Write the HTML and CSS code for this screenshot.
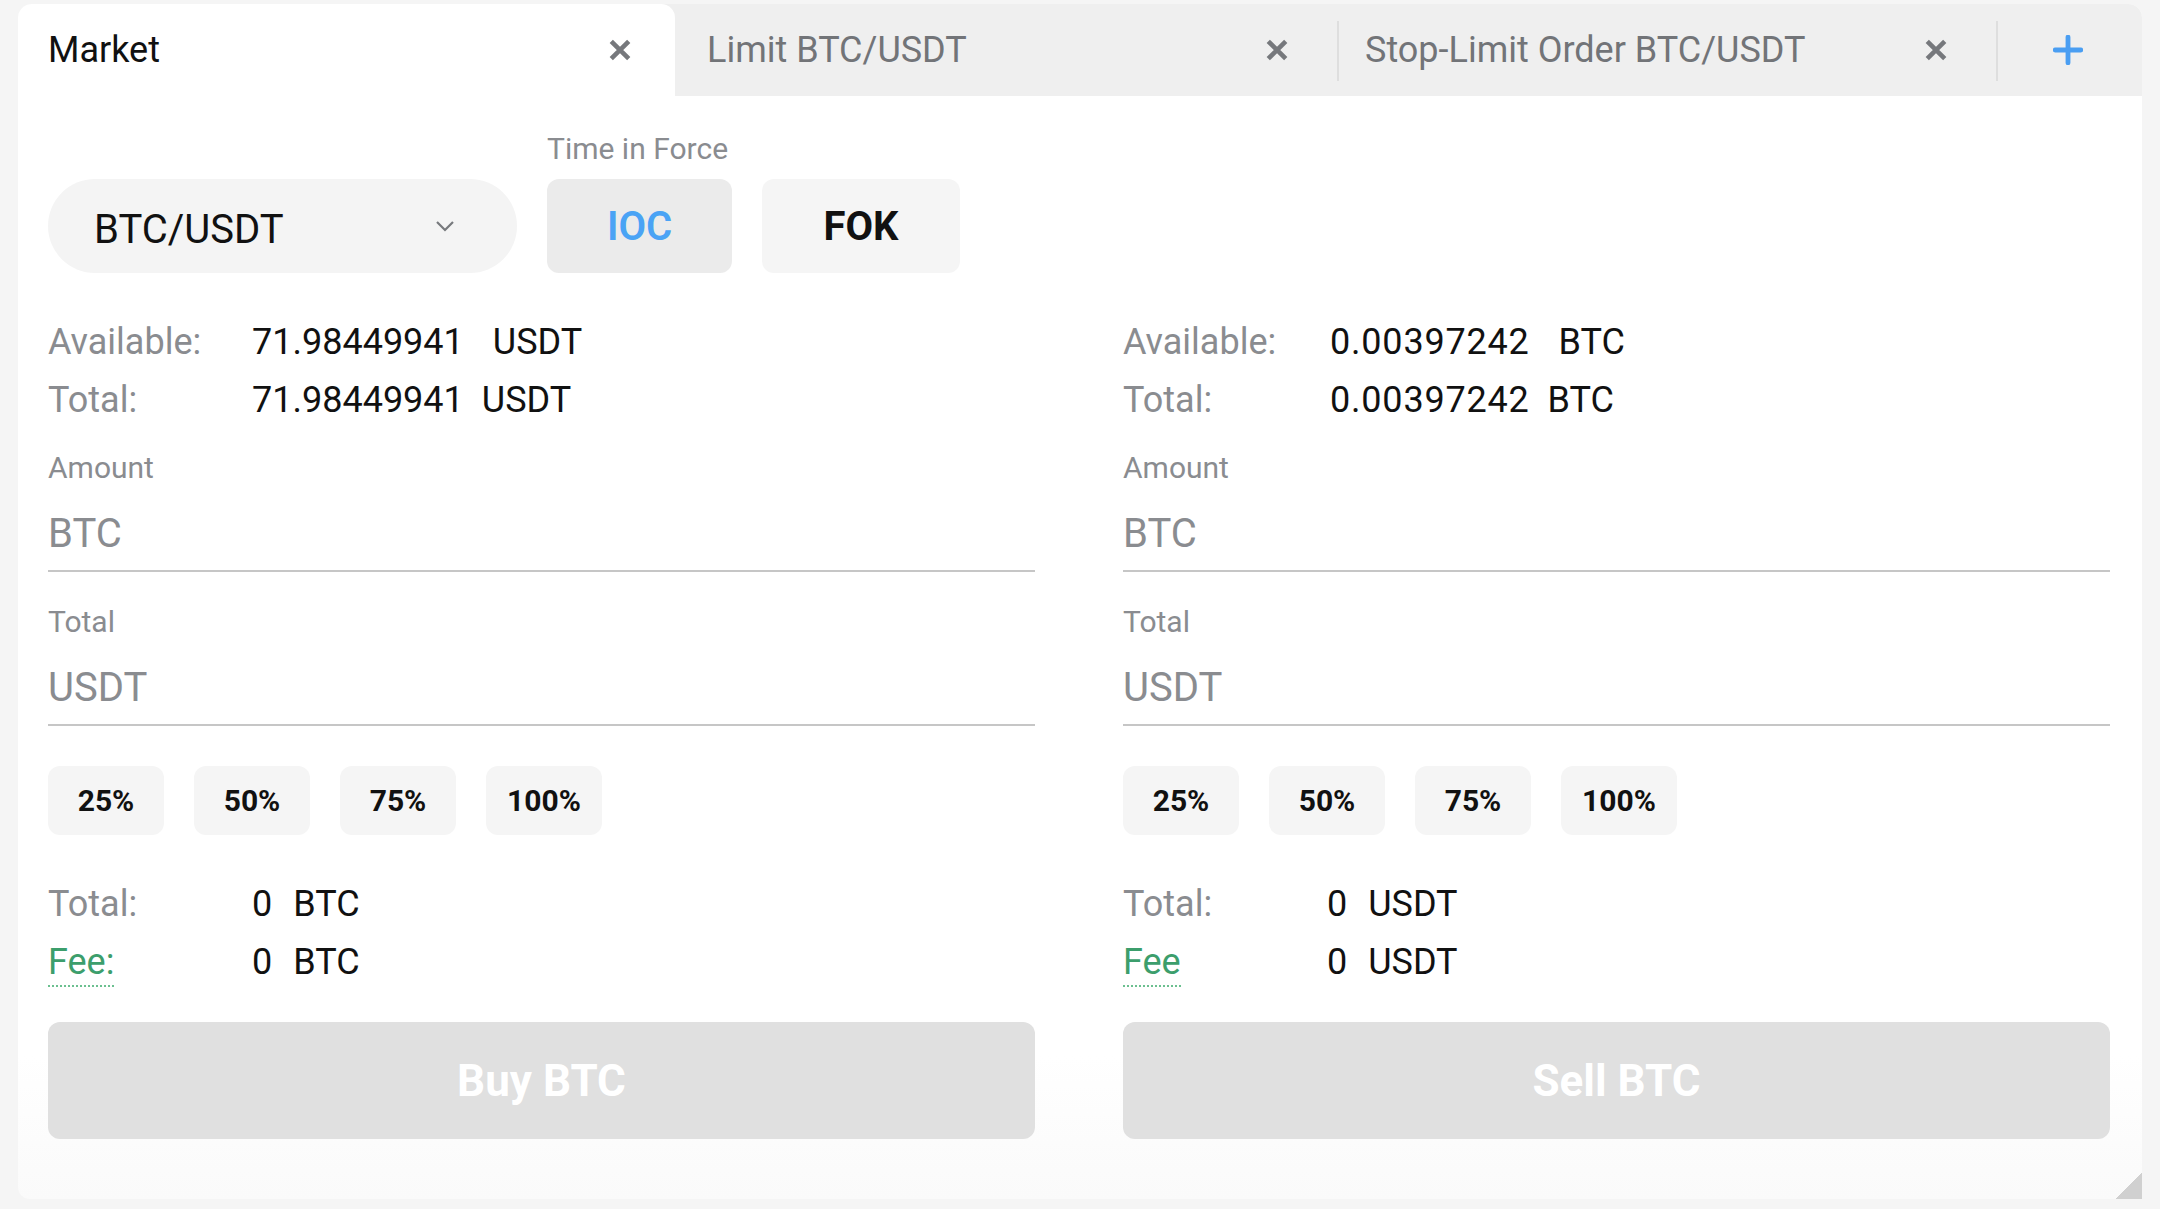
FILE: index.html
```html
<!DOCTYPE html>
<html lang="en">
<head>
<meta charset="utf-8">
<title>Market order</title>
<link rel="stylesheet" href="styles.css">
</head>
<body>
<div class="panel">
  <div class="tabs">
    <div class="tab tab-active">
      <span class="tab-title">Market</span>
      <svg class="tab-close" viewBox="0 0 22 22"><path d="M3 3L19 19M19 3L3 19"/></svg>
    </div>
    <div class="tab tab-sep tab-limit">
      <span class="tab-title">Limit BTC/USDT</span>
      <svg class="tab-close" viewBox="0 0 22 22"><path d="M3 3L19 19M19 3L3 19"/></svg>
    </div>
    <div class="tab tab-sep">
      <span class="tab-title">Stop-Limit Order BTC/USDT</span>
      <svg class="tab-close" viewBox="0 0 22 22"><path d="M3 3L19 19M19 3L3 19"/></svg>
    </div>
    <div class="tab-add">
      <svg class="plus" viewBox="0 0 28 28"><path d="M14 2V26M2 14H26"/></svg>
    </div>
  </div>

  <div class="body">
    <div class="top">
      <div class="pair">
        <span class="pair-name">BTC/USDT</span>
        <svg class="chevron" viewBox="0 0 20 12"><path d="M2 2L10 10L18 2"/></svg>
      </div>
      <div class="tif">
        <div class="tif-label">Time in Force</div>
        <div class="tif-btns">
          <div class="tif-btn tif-on">IOC</div>
          <div class="tif-btn tif-fok">FOK</div>
        </div>
      </div>
    </div>

    <div class="cols">
      <div class="col">
        <div class="row"><span class="lbl">Available:</span><span class="val">71.98449941</span><span class="unit unit-wide">USDT</span></div>
        <div class="row"><span class="lbl">Total:</span><span class="val">71.98449941</span><span class="unit">USDT</span></div>
        <div class="field">
          <div class="field-label">Amount</div>
          <div class="field-input">BTC</div>
        </div>
        <div class="field">
          <div class="field-label">Total</div>
          <div class="field-input">USDT</div>
        </div>
        <div class="pcts">
          <div class="pct">25%</div>
          <div class="pct">50%</div>
          <div class="pct">75%</div>
          <div class="pct">100%</div>
        </div>
        <div class="sum">
          <div class="row"><span class="lbl">Total:</span><span class="val">0</span><span class="unit unit-sm">BTC</span></div>
          <div class="row"><span class="lbl"><span class="fee">Fee:</span></span><span class="val">0</span><span class="unit unit-sm">BTC</span></div>
        </div>
        <div class="action">Buy BTC</div>
      </div>

      <div class="col">
        <div class="row"><span class="lbl">Available:</span><span class="val val-r">0.00397242</span><span class="unit unit-wide">BTC</span></div>
        <div class="row"><span class="lbl">Total:</span><span class="val val-r">0.00397242</span><span class="unit">BTC</span></div>
        <div class="field">
          <div class="field-label">Amount</div>
          <div class="field-input">BTC</div>
        </div>
        <div class="field">
          <div class="field-label">Total</div>
          <div class="field-input">USDT</div>
        </div>
        <div class="pcts">
          <div class="pct">25%</div>
          <div class="pct">50%</div>
          <div class="pct">75%</div>
          <div class="pct">100%</div>
        </div>
        <div class="sum">
          <div class="row"><span class="lbl">Total:</span><span class="val">0</span><span class="unit unit-sm">USDT</span></div>
          <div class="row"><span class="lbl"><span class="fee">Fee</span></span><span class="val">0</span><span class="unit unit-sm">USDT</span></div>
        </div>
        <div class="action">Sell BTC</div>
      </div>
    </div>
  </div>
  <div class="resize"></div>
</div>
</body>
</html>
```

FILE: styles.css
```css
* { box-sizing: border-box; }

html, body {
  margin: 0;
  padding: 0;
  background: #f5f5f5;
  font-family: Roboto, "Liberation Sans", Arial, sans-serif;
  color: #111;
}

body {
  padding: 4px 18px 10px 18px;
}

.panel {
  position: relative;
  width: 2124px;
  height: 1195px;
  background: linear-gradient(to bottom, #ffffff 0%, #ffffff 88%, #fafafa 100%);
  border-radius: 14px 14px 12px 12px;
}

/* Tabs */
.tabs {
  display: flex;
  height: 92px;
  background: #efefef;
  border-radius: 14px 14px 0 0;
}

.tab {
  position: relative;
  display: flex;
  align-items: center;
  justify-content: space-between;
  width: 659px;
  padding: 0 50px 0 26px;
  font-size: 36px;
  color: #727478;
}

.tab-limit {
  width: 664px;
  padding-left: 32px;
}

.tab-active {
  width: 657px;
  background: #fff;
  color: #111;
  border-radius: 14px 14px 0 0;
  padding: 0 43px 0 30px;
}

.tab-sep::after {
  content: "";
  position: absolute;
  right: 0;
  top: 17px;
  width: 2px;
  height: 60px;
  background: #dedede;
}

.tab-close {
  width: 24px;
  height: 24px;
  fill: none;
  stroke: #76787c;
  stroke-width: 4.2;
}

.tab-add {
  flex: 1;
  display: flex;
  align-items: center;
  justify-content: center;
  padding-right: 4px;
}

.plus {
  width: 30px;
  height: 30px;
  fill: none;
  stroke: #4a9ef2;
  stroke-width: 4.5;
  stroke-linecap: round;
}

/* Body */
.body {
  padding: 35px 32px 0 30px;
}

.top {
  display: flex;
  align-items: flex-end;
  gap: 30px;
}

.pair {
  width: 469px;
  height: 94px;
  border-radius: 47px;
  background: #f4f4f4;
  display: flex;
  align-items: center;
  justify-content: space-between;
  padding: 0 62px 0 46px;
}

.pair-name {
  font-size: 40px;
  color: #111;
  padding-top: 7px;
}

.chevron {
  width: 20px;
  height: 12px;
  fill: none;
  stroke: #77797d;
  stroke-width: 2.2;
}

.tif-label {
  font-size: 30px;
  line-height: 36px;
  color: #8a8c90;
  margin-bottom: 12px;
}

.tif-btns {
  display: flex;
  gap: 30px;
}

.tif-btn {
  height: 94px;
  width: 185px;
  border-radius: 12px;
  background: #f5f5f5;
  display: flex;
  align-items: center;
  justify-content: center;
  font-size: 40px;
  font-weight: 700;
  color: #111;
}

.tif-fok {
  width: 198px;
}

.tif-on {
  background: #ebebeb;
  color: #4aa3f5;
  font-weight: 600;
}

/* Columns */
.cols {
  display: grid;
  grid-template-columns: 1fr 1fr;
  gap: 88px;
  margin-top: 40px;
}

.row {
  display: flex;
  align-items: center;
  height: 58px;
  font-size: 36px;
}

.lbl {
  width: 204px;
  flex: none;
  color: #8a8c90;
}

.val {
  color: #111;
}

.val-r {
  margin-left: 3px;
  letter-spacing: 0.8px;
}

.unit {
  margin-left: 18px;
  color: #111;
}

.unit-wide {
  margin-left: 29px;
}

.unit-sm {
  margin-left: 21px;
}

.field {
  margin-top: 21px;
}

.field + .field {
  margin-top: 32px;
}

.field-label {
  font-size: 30px;
  line-height: 36px;
  color: #8a8c90;
}

.field-input {
  padding-top: 11px;
  line-height: 73px;
  height: 86px;
  font-size: 40px;
  color: #8a8c90;
  border-bottom: 2px solid #c6c6c6;
}

.pcts {
  display: flex;
  gap: 30px;
  margin-top: 40px;
}

.pct {
  width: 116px;
  height: 69px;
  border-radius: 12px;
  background: #f5f5f5;
  display: flex;
  align-items: center;
  justify-content: center;
  font-size: 30px;
  font-weight: 700;
  color: #111;
}

.sum {
  margin-top: 40px;
}

.fee {
  color: #3c9e6c;
  border-bottom: 2px dotted #6cc090;
  padding-bottom: 2px;
}

.action {
  margin-top: 31px;
  height: 117px;
  border-radius: 12px;
  background: #e0e0e0;
  display: flex;
  align-items: center;
  justify-content: center;
  font-size: 44px;
  font-weight: 700;
  color: #fff;
}

.resize {
  position: absolute;
  right: 0;
  bottom: 0;
  width: 27px;
  height: 26px;
  background: linear-gradient(to bottom right, transparent 50%, #d0d0d0 50%);
}
```
